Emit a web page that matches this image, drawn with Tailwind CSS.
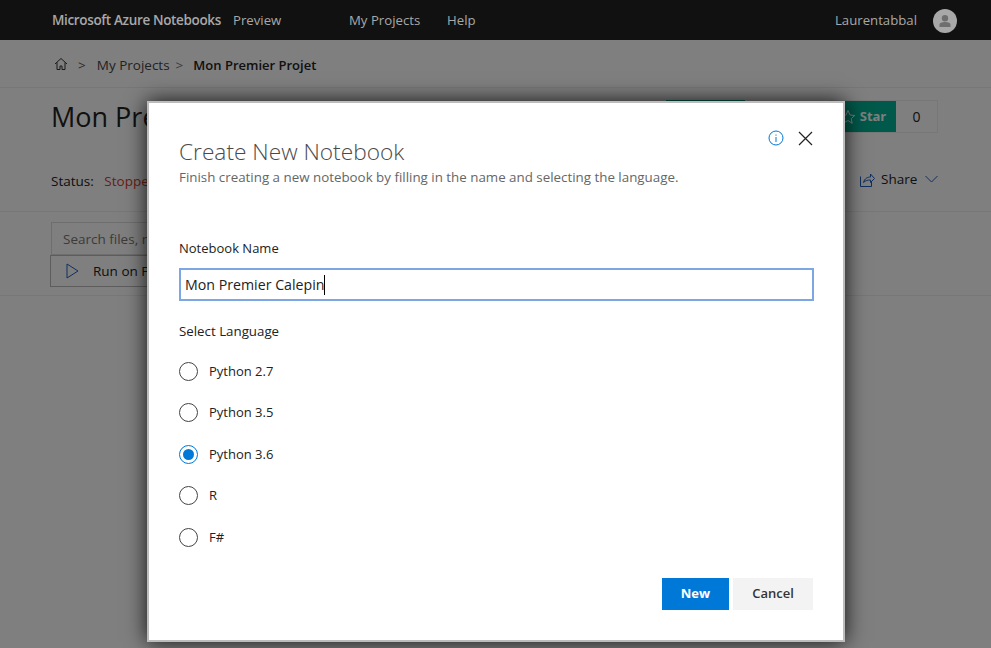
<!DOCTYPE html>
<html lang="en">
  <head>
    <meta charset="UTF-8" />
    <meta name="viewport" content="width=device-width, initial-scale=1.0" />
    <title>Azure Notebooks</title>
    <script src="https://cdn.jsdelivr.net/npm/@tailwindcss/browser@4"></script>
  </head>
  <body class="relative w-[991px] h-[648px] overflow-hidden bg-white font-['Open_Sans','Noto_Sans',sans-serif] text-[#222]">
    <!-- top bar -->
    <header class="flex items-center h-10 pt-px pl-[52px] pr-[34px] bg-[#111] text-[#a8a8a8] text-[13.2px]">
      <span class="w-[181px] text-[13.5px] font-semibold tracking-[-0.35px] whitespace-nowrap">Microsoft Azure Notebooks</span>
      <span class="w-[116px]">Preview</span>
      <span class="w-[98px]">My Projects</span>
      <span>Help</span>
      <span class="ml-auto mr-4">Laurentabbal</span>
      <span class="flex items-center justify-center w-6 h-6 rounded-full bg-[#a8a8a8]">
        <svg width="14" height="14" viewBox="0 0 14 14" fill="#6e6e6e"><circle cx="7" cy="4.2" r="3.2" /><path d="M1.5 13v-2.2c0-1.8 2-2.8 5.500-2.800s5.500 1 5.500 2.800V13z" /></svg>
      </span>
    </header>

    <!-- page behind the dialog -->
    <nav class="flex items-center h-12 pt-1 pl-[54px] border-b border-[#eee] text-[13.500px]">
      <svg class="-mt-1" width="14" height="14" viewBox="0 0 14 14" fill="none" stroke="#333" stroke-width="1"><path d="M1 7l6-5.500 6 5.500M3 5.500V12.500h3v-3.500h2v3.500h3V5.500" /></svg>
      <span class="ml-[10px] mr-[11px] text-[#555]">&gt;</span>
      <span class="text-[#444]">My Projects</span>
      <span class="ml-[6px] mr-[10px] text-[#777]">&gt;</span>
      <span class="text-[13px] font-semibold">Mon Premier Projet</span>
    </nav>
    <section class="relative h-[124px] pl-[51px] border-b border-[#eee]">
      <h1 class="pt-[9px] text-[27px] leading-[40px]">Mon Premier Projet</h1>
      <p class="mt-[34px] text-[13.500px]">Status: <span class="ml-[7px] text-[#d0402f]">Stopped</span></p>
      <div class="absolute left-[666px] top-[12px] w-[79px] h-[32px] bg-[#00b294]"></div>
      <div class="absolute left-[829px] top-[12px] flex items-center w-[109px] h-[33px] border border-[#eee]">
        <span class="flex items-center justify-center gap-1 w-[66px] h-full bg-[#00b294] text-[13px] font-bold text-white">
          <svg width="16" height="16" viewBox="0 0 16 16" fill="none" stroke="white"><path d="M8 1.500l2 4.500 4.700.5-3.500 3.200 1 4.700L8 11.500l-4.200 2.400 1-4.700L1.300 6.500 6 6z" /></svg>
          Star
        </span>
        <span class="flex-1 text-center text-[14px]">0</span>
      </div>
      <div class="absolute left-[860px] top-[81px] flex items-center gap-[6px] text-[13.500px]">
        <svg width="15" height="15" viewBox="0 0 15 15" fill="none" stroke="#1f5fc0"><path d="M.5 4.500v10h11V10M3.500 10.500c1-4 4-5.500 7-5.500V2l4 4.500-4 4V8c-3 0-5 .5-7 2.500z" /></svg>
        Share
        <svg class="ml-[2px]" width="13" height="8" viewBox="0 0 13 8" fill="none" stroke="#1f5fc0"><path d="M.5 1l6 6 6-6" /></svg>
      </div>
    </section>
    <section class="h-[84px] pt-[10px] pl-[50px] border-b border-[#eee]">
      <div class="ml-[1px] flex items-center w-[300px] h-[33px] pt-[2px] pl-[11px] border border-[#ddd] text-[13.500px] text-[#777]">Search files, name</div>
      <div class="flex items-center w-[300px] h-[32px] pl-[15px] border border-[#bbb] text-[13.500px]">
        <svg width="13" height="16" viewBox="0 0 13 16" fill="none" stroke="#1f5fc0"><path d="M1 1l11 7-11 7z" /></svg>
        <span class="ml-[14px]">Run on Free Compute</span>
      </div>
    </section>

    <!-- dim layer -->
    <div class="absolute inset-x-0 top-10 bottom-0 bg-black/50"></div>

    <!-- dialog -->
    <div class="absolute left-[147px] top-[101px] flex flex-col w-[698px] h-[541px] pl-[30px] pr-[30px] bg-white border-[2px] border-[#bcbcbc] shadow-[0_0_20px_rgba(0,0,0,0.85)]">
      <div class="absolute right-[30px] top-[27px] flex items-center gap-[14px]">
        <svg width="16" height="16" viewBox="0 0 16 16" fill="none" stroke="#0078d7"><circle cx="8" cy="8" r="7" /><path d="M8 7v5M8 4.500v1.200" /></svg>
        <svg width="15" height="15" viewBox="0 0 15 15" fill="none" stroke="#222" stroke-width="1.200"><path d="M1 1l13 13M14 1L1 14" /></svg>
      </div>
      <h2 class="mt-[33px] text-[22.700px] leading-[31px] font-light text-[#4a4a4a]">Create New Notebook</h2>
      <p class="mt-[2px] text-[13.350px] leading-[17px] text-[#666]">Finish creating a new notebook by filling in the name and selecting the language.</p>
      <label class="mt-[53px] text-[13px] leading-[18px]">Notebook Name</label>
      <div class="flex items-center mt-[11px] w-[635px] h-[33px] pl-[4px] border-2 border-[#7da7e3] text-[14.200px]">
        Mon Premier Calepin<span class="w-px h-[20px] bg-black"></span>
      </div>
      <p class="mt-[21px] text-[13.300px] leading-[18px]">Select Language</p>
      <ul class="mt-[10.500px] flex flex-col text-[13px]">
        <li class="flex items-center h-[41.500px] gap-[11px]"><span class="w-[19px] h-[19px] rounded-full border border-[#444]"></span>Python 2.7</li>
        <li class="flex items-center h-[41.500px] gap-[11px]"><span class="w-[19px] h-[19px] rounded-full border border-[#444]"></span>Python 3.5</li>
        <li class="flex items-center h-[41.500px] gap-[11px]">
          <span class="flex items-center justify-center w-[19px] h-[19px] rounded-full border border-[#0078d7]"><span class="w-[11px] h-[11px] rounded-full bg-[#0078d7]"></span></span>Python 3.6
        </li>
        <li class="flex items-center h-[41.500px] gap-[11px]"><span class="w-[19px] h-[19px] rounded-full border border-[#444]"></span>R</li>
        <li class="flex items-center h-[41.500px] gap-[11px]"><span class="w-[19px] h-[19px] rounded-full border border-[#444]"></span>F#</li>
      </ul>
      <div class="flex justify-end gap-1 mt-[19.500px] w-[634px]">
        <button class="w-[67px] h-8 pt-px bg-[#0078d7] text-white text-[13px] font-bold">New</button>
        <button class="w-[80px] h-8 pt-px bg-[#f3f3f3] text-[13px] font-semibold text-[#333]">Cancel</button>
      </div>
    </div>
  </body>
</html>
